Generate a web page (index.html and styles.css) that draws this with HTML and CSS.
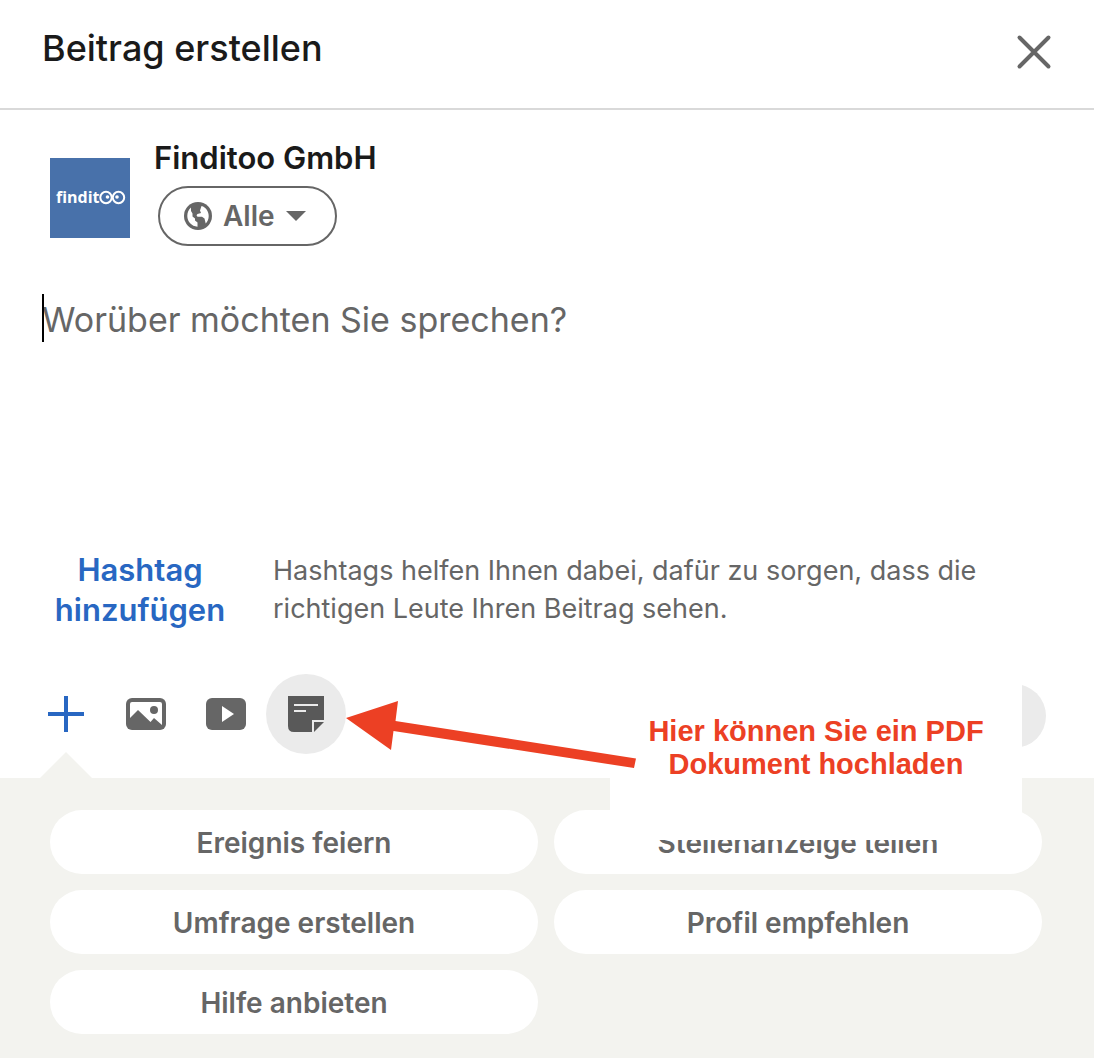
FILE: index.html
```html
<!DOCTYPE html>
<html lang="de">
<head>
    <meta charset="UTF-8">
    <meta name="viewport" content="width=device-width, initial-scale=1.0">
    <title>Beitrag erstellen</title>
    <link rel="stylesheet" href="styles.css">
</head>
<body>
    <header class="header">
        <h1>Beitrag erstellen</h1>
        <button type="button" class="close-btn" aria-label="Schließen">
            <svg width="36" height="36" viewBox="0 0 36 36">
                <path d="M3.5 3.5 32.5 32.5M32.5 3.5 3.5 32.5" stroke="currentColor" stroke-width="4" stroke-linecap="round" fill="none"/>
            </svg>
        </button>
    </header>

    <main>
        <div class="author">
            <svg class="logo" width="80" height="80" viewBox="0 0 80 80" role="img" aria-label="finditoo">
                <rect width="80" height="80" fill="#4871aa"/>
                <text x="6" y="45" class="logo-text">findit</text>
                <g fill="none" stroke="#fff" stroke-width="2">
                    <circle cx="56" cy="39.5" r="5.7"/>
                    <circle cx="68.5" cy="39.5" r="5.7"/>
                </g>
                <circle cx="57.5" cy="39" r="1.8" fill="#fff"/>
                <circle cx="67" cy="39" r="1.8" fill="#fff"/>
            </svg>
            <div class="author-info">
                <h2>Finditoo GmbH</h2>
                <label class="visibility">
                    <svg width="28" height="28" viewBox="0 0 28 28" aria-hidden="true">
                        <circle cx="14" cy="14" r="14" fill="#666"/>
                        <path d="M7 5.5C4.500 7.500 3.300 10.500 3.300 14C3.300 19.500 7.500 24.300 13.500 24.700V20.500L11 18.500V16.500L8.500 14.500V11.500L7 9Z" fill="#fff"/>
                        <path d="M17.500 4C22 5.300 24.700 9.500 24.700 14C24.700 17 23.500 19.500 21.700 21.500L20.500 16.500 18 14.800H13.500L12.500 13.200 13.500 12 17 11 16 8.500Z" fill="#fff"/>
                    </svg>
                    <select aria-label="Sichtbarkeit">
                        <option>Alle</option>
                    </select>
                    <svg width="20" height="10" viewBox="0 0 20 10" aria-hidden="true">
                        <path d="M0 0H20L10 10Z" fill="#666"/>
                    </svg>
                </label>
            </div>
        </div>

        <div class="editor">
            <textarea aria-label="Beitragstext" placeholder="Worüber möchten Sie sprechen?"></textarea>
        </div>

        <div class="hashtags">
            <button type="button">Hashtag hinzufügen</button>
            <p>Hashtags helfen Ihnen dabei, dafür zu sorgen, dass die richtigen Leute Ihren Beitrag sehen.</p>
        </div>
    </main>

    <footer class="footer">
        <div class="toolbar">
            <button type="button" class="tool tool-add" aria-label="Mehr">
                <svg width="36" height="36" viewBox="0 0 36 36">
                    <path d="M16 0H20V16H36V20H20V36H16V20H0V16H16Z" fill="currentColor"/>
                </svg>
            </button>
            <button type="button" class="tool" aria-label="Foto">
                <svg width="40" height="32" viewBox="0 0 40 32">
                    <rect width="40" height="32" rx="6" fill="currentColor"/>
                    <path d="M4 6Q4 4 6 4H34Q36 4 36 6V27L28 20 24.500 24 12 12 4 20Z" fill="#fff"/>
                    <circle cx="28" cy="12" r="4" fill="currentColor"/>
                </svg>
            </button>
            <button type="button" class="tool" aria-label="Video">
                <svg width="40" height="32" viewBox="0 0 40 32">
                    <rect width="40" height="32" rx="6" fill="currentColor"/>
                    <path d="M16 8V24L28 16Z" fill="#fff"/>
                </svg>
            </button>
            <button type="button" class="tool tool-active" aria-label="Dokument">
                <svg width="36" height="36" viewBox="0 0 36 36">
                    <path d="M0 0H36V24H24V36H6Q0 36 0 30Z" fill="currentColor"/>
                    <path d="M26 26H36L26 36Z" fill="currentColor"/>
                    <path d="M6 8H30V10H6ZM6 14H18V16H6Z" fill="#ebebeb"/>
                </svg>
            </button>
            <button type="button" class="post-btn" aria-label="Posten" disabled></button>
        </div>

        <div class="options">
            <button type="button">Ereignis feiern</button>
            <button type="button">Stellenanzeige teilen</button>
            <button type="button">Umfrage erstellen</button>
            <button type="button">Profil empfehlen</button>
            <button type="button">Hilfe anbieten</button>
        </div>

        <p class="note">Hier können Sie ein PDF Dokument hochladen</p>
        <svg class="arrow" width="292" height="52" viewBox="0 0 292 52" aria-hidden="true">
            <path d="M0 18 52 1 49.500 21 290 58.500 288 68 47.500 31 45 50Z" fill="#ec4024"/>
        </svg>
    </footer>
</body>
</html>
```
FILE: styles.css
```css
* {
    box-sizing: border-box;
}
body {
    margin: 0;
    font-family: Inter, "Liberation Sans", sans-serif;
    color: #1a1a1a;
    background-color: #fff;
}
h1, h2, p {
    margin: 0;
}
button, select, textarea {
    font-family: inherit;
    border: none;
    background: none;
    padding: 0;
}
button {
    cursor: pointer;
}
svg {
    display: block;
}
.header {
    display: flex;
    justify-content: space-between;
    align-items: flex-start;
    padding: 24px 42px 36px;
    border-bottom: 2px solid #d9d9d9;
}
.header h1 {
    font-size: 36px;
    font-weight: 500;
    line-height: 48px;
}
.close-btn {
    color: #666;
    padding-top: 10px;
}
.author {
    display: flex;
    align-items: flex-start;
    gap: 24px;
    padding: 30px 50px 48px;
}
.logo {
    margin-top: 18px;
}
.logo-text {
    font-family: "Open Sans", sans-serif;
    font-size: 16px;
    font-weight: 700;
    fill: #fff;
}
.author-info h2 {
    font-size: 31px;
    font-weight: 600;
    line-height: 36px;
    margin-bottom: 10px;
}
.visibility {
    display: inline-flex;
    align-items: center;
    gap: 11px;
    height: 60px;
    margin-left: 4px;
    padding: 0 29px 0 24px;
    border: 2px solid #666;
    border-radius: 30px;
}
.visibility select {
    appearance: none;
    color: #666;
    font-size: 28px;
    font-weight: 600;
}
.editor {
    position: relative;
    padding: 0 42px;
}
.editor::before {
    content: "";
    position: absolute;
    width: 2px;
    height: 48px;
    background-color: #000;
}
.editor textarea {
    display: block;
    width: 100%;
    height: 256px;
    padding-top: 2px;
    font-size: 34px;
    line-height: 48px;
    resize: none;
    outline: none;
}
.editor textarea::placeholder {
    color: #666;
    opacity: 1;
}
.hashtags {
    display: flex;
    gap: 33px;
    padding: 0 50px 44px 40px;
}
.hashtags button {
    width: 200px;
    color: #2867c2;
    font-size: 31px;
    font-weight: 600;
    line-height: 40px;
}
.hashtags p {
    flex: 1;
    padding-top: 2px;
    color: #666;
    font-size: 27px;
    line-height: 38px;
}
.footer {
    position: relative;
}
.toolbar {
    display: flex;
    align-items: center;
    padding: 0 48px 24px 26px;
}
.tool {
    display: flex;
    align-items: center;
    justify-content: center;
    width: 80px;
    height: 80px;
    border-radius: 50%;
    color: #666;
}
.tool-add {
    position: relative;
    color: #2867c2;
}
/* pointer of the options panel */
.tool-add::after {
    content: "";
    position: absolute;
    top: 78px;
    left: 14px;
    border: 26px solid transparent;
    border-top: none;
    border-bottom-color: #f3f3ef;
}
.tool-active {
    background-color: #ebebeb;
    color: #595959;
}
.post-btn {
    width: 160px;
    height: 64px;
    margin-top: 4px;
    margin-left: auto;
    border-radius: 32px;
    background-color: #ebebeb;
}
.options {
    display: grid;
    grid-template-columns: 1fr 1fr;
    gap: 16px;
    padding: 32px 52px 24px 50px;
    background-color: #f3f3ef;
}
.options button {
    height: 64px;
    padding-top: 2px;
    border-radius: 32px;
    background-color: #fff;
    color: #666;
    font-size: 28px;
    font-weight: 600;
}
.note {
    position: absolute;
    top: 0;
    right: 72px;
    width: 412px;
    height: 166px;
    padding: 41px 30px 0;
    background-color: #fff;
    color: #ec4024;
    font-family: "Liberation Sans", Arial, sans-serif;
    font-size: 29px;
    font-weight: 700;
    line-height: 33px;
    text-align: center;
}
.arrow {
    position: absolute;
    top: 26px;
    left: 346px;
    overflow: visible;
}
```
